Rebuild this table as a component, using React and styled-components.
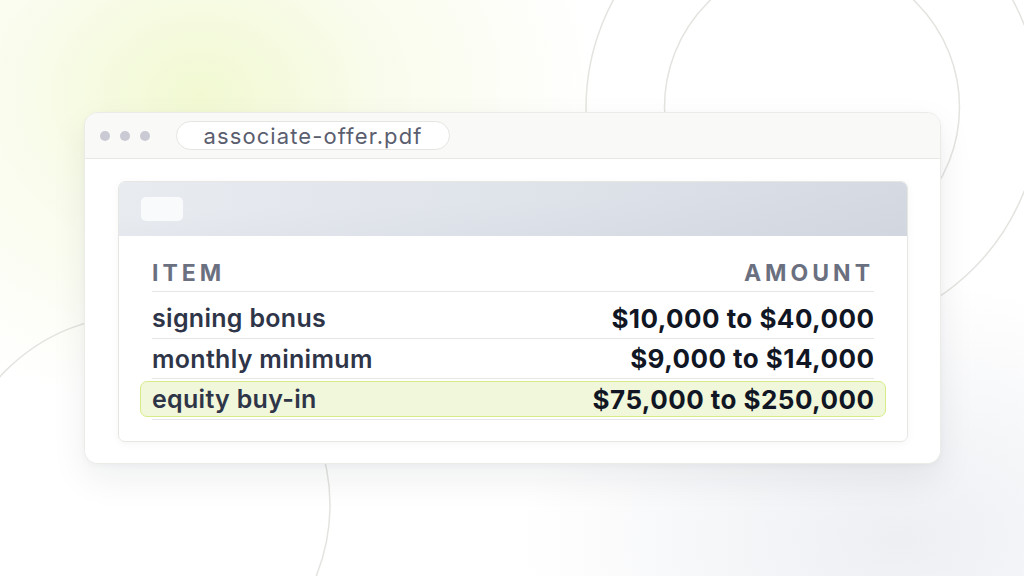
import React from "react";
import styled, { createGlobalStyle } from "styled-components";

const Global = createGlobalStyle`
  html, body { margin: 0; padding: 0; }
  body {
    width: 1024px;
    height: 576px;
    overflow: hidden;
    background: #ffffff;
    font-family: Inter, "Noto Sans", sans-serif;
  }
`;

const Stage = styled.div`
  position: relative;
  width: 1024px;
  height: 576px;
  box-sizing: border-box;
  padding: 112px 0 0 84px;
  overflow: hidden;
  background:
    radial-gradient(ellipse 400px 320px at 200px 95px, rgba(240, 248, 205, 0.9) 0%, rgba(244, 250, 220, 0.55) 45%, rgba(255, 255, 255, 0) 100%),
    radial-gradient(ellipse 380px 260px at 900px 540px, rgba(236, 238, 242, 0.95) 0%, rgba(255, 255, 255, 0) 100%),
    #ffffff;
`;

const Decor = styled.svg`
  position: absolute;
  inset: 0;
  width: 1024px;
  height: 576px;
  pointer-events: none;
`;

const Window = styled.div`
  position: relative;
  width: 857px;
  height: 352px;
  box-sizing: border-box;
  display: flex;
  flex-direction: column;
  background: #ffffff;
  border: 1px solid #ebebe7;
  border-radius: 14px;
  box-shadow: 0 14px 36px rgba(20, 24, 40, 0.07), 0 2px 6px rgba(20, 24, 40, 0.03);
  overflow: hidden;
`;

const TitleBar = styled.div`
  height: 46px;
  flex: none;
  box-sizing: border-box;
  display: flex;
  align-items: center;
  padding: 0 0 0 15px;
  background: #f9f9f7;
  border-bottom: 1px solid #e8e8e4;
`;

const Dots = styled.div`
  display: flex;
  gap: 10px;
  margin-right: 26px;
`;

const Dot = styled.span`
  width: 10px;
  height: 10px;
  border-radius: 50%;
  background: #c9cad3;
`;

const UrlPill = styled.div`
  width: 274px;
  height: 29px;
  box-sizing: border-box;
  display: flex;
  align-items: center;
  justify-content: center;
  background: #ffffff;
  border: 1px solid #e4e4e0;
  border-radius: 15px;
  color: #5a5e6e;
  font-size: 22px;
  font-weight: 400;
  letter-spacing: 1.1px;
`;

const Body = styled.div`
  flex: 1;
  padding: 22px 33px;
  background: #ffffff;
`;

const Card = styled.div`
  width: 790px;
  height: 261px;
  box-sizing: border-box;
  border: 1px solid #e6e6e3;
  border-radius: 7px;
  overflow: hidden;
  background: #ffffff;
  box-shadow: 0 2px 8px rgba(20, 24, 40, 0.04);
`;

const CardHeader = styled.div`
  height: 54px;
  display: flex;
  align-items: center;
  padding-left: 22px;
  background: linear-gradient(178deg, rgba(255,255,255,0) 40%, rgba(200,205,216,0.25) 100%),
    linear-gradient(95deg, #e8ebf0 0%, #dfe3ea 50%, #d5d9e1 100%);
`;

const HeaderChip = styled.span`
  width: 42px;
  height: 24px;
  border-radius: 5px;
  background: #f9fafb;
`;

const Table = styled.div`
  padding: 18px 33px 0 33px;
  display: flex;
  flex-direction: column;
`;

const Row = styled.div`
  position: relative;
  z-index: 0;
  display: flex;
  justify-content: space-between;
  align-items: center;
  height: ${(p) => p.$h}px;
  padding-top: ${(p) => p.$pt || 0}px;
  box-sizing: border-box;
  border-bottom: 1px solid #e6e6e4;

  ${(p) =>
    p.$highlight &&
    `
    &::before {
      content: "";
      position: absolute;
      z-index: -1;
      left: -12px;
      right: -12px;
      top: 2px;
      bottom: 2px;
      border-radius: 7px;
      background: #f1f7da;
      border: 1.5px solid #d5ec88;
    }
  `}
`;

const HeadCell = styled.span`
  font-size: 23px;
  font-weight: 700;
  letter-spacing: 4px;
  color: #6b7080;
`;

const ItemCell = styled.span`
  font-size: 25px;
  font-weight: 600;
  color: #2f3548;
  letter-spacing: 0.3px;
`;

const AmountCell = styled.span`
  font-size: 26px;
  font-weight: 700;
  color: #111624;
  letter-spacing: 0.45px;
  margin-right: -0.45px;
`;

const rows = [
  { item: "signing bonus", amount: "$10,000 to $40,000", h: 47, pt: 6 },
  { item: "monthly minimum", amount: "$9,000 to $14,000", h: 40 },
  { item: "equity buy-in", amount: "$75,000 to $250,000", h: 41, highlight: true },
];

export default function App() {
  return (
    <>
      <Global />
      <Stage>
        <Decor viewBox="0 0 1024 576">
          <g fill="none" stroke="#e3e3df" strokeWidth="1.5">
            <circle cx="813" cy="108" r="227" />
            <circle cx="812" cy="107" r="147.5" />
            <circle cx="140" cy="505" r="190" />
          </g>
        </Decor>
        <Window>
          <TitleBar>
            <Dots>
              <Dot />
              <Dot />
              <Dot />
            </Dots>
            <UrlPill>associate-offer.pdf</UrlPill>
          </TitleBar>
          <Body>
            <Card>
              <CardHeader>
                <HeaderChip />
              </CardHeader>
              <Table>
                <Row $h={38}>
                  <HeadCell>ITEM</HeadCell>
                  <HeadCell>AMOUNT</HeadCell>
                </Row>
                {rows.map((r) => (
                  <Row key={r.item} $h={r.h} $pt={r.pt} $highlight={r.highlight}>
                    <ItemCell>{r.item}</ItemCell>
                    <AmountCell>{r.amount}</AmountCell>
                  </Row>
                ))}
              </Table>
            </Card>
          </Body>
        </Window>
      </Stage>
    </>
  );
}
